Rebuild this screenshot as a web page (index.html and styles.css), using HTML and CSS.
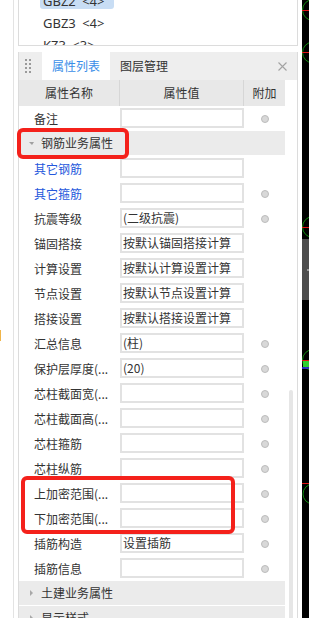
FILE: index.html
```html
<!DOCTYPE html>
<html lang="zh-CN">
<head>
    <meta charset="UTF-8">
    <meta name="viewport" content="width=device-width, initial-scale=1.0">
    <title>属性列表</title>
    <link rel="stylesheet" href="styles.css">
</head>
<body>
    <div class="app">
        <div class="dock-left"><span class="dock-mark"></span></div>

        <div class="workspace">
            <div class="comp-list">
                <ul>
                    <li class="selected">GBZ2 &lt;4&gt;</li>
                    <li>GBZ3 &lt;4&gt;</li>
                    <li>KZ3 &lt;3&gt;</li>
                </ul>
            </div>

            <div class="prop-panel">
                <div class="tab-bar">
                    <span class="grip"></span>
                    <span class="tab active">属性列表</span>
                    <span class="tab">图层管理</span>
                    <svg class="close" width="9" height="9" viewBox="0 0 9 9">
                        <path d="M0.5 0.5 L8.5 8.5 M8.5 0.5 L0.5 8.5" stroke="#a3a3a3" stroke-width="1.1" fill="none"/>
                    </svg>
                </div>

                <div class="prop-body">
                    <div class="prop-table">
                        <div class="prop-head">
                            <span>属性名称</span>
                            <span>属性值</span>
                            <span>附加</span>
                        </div>

                        <div class="prop-row">
                            <span class="label">备注</span>
                            <span class="value"></span>
                            <span class="extra"><i class="radio"></i></span>
                        </div>

                        <div class="prop-group open"><i class="arrow"></i>钢筋业务属性</div>

                        <div class="prop-row">
                            <span class="label link">其它钢筋</span>
                            <span class="value"></span>
                            <span class="extra"></span>
                        </div>
                        <div class="prop-row">
                            <span class="label link">其它箍筋</span>
                            <span class="value"></span>
                            <span class="extra"><i class="radio"></i></span>
                        </div>
                        <div class="prop-row">
                            <span class="label">抗震等级</span>
                            <span class="value">(二级抗震)</span>
                            <span class="extra"><i class="radio"></i></span>
                        </div>
                        <div class="prop-row">
                            <span class="label">锚固搭接</span>
                            <span class="value">按默认锚固搭接计算</span>
                            <span class="extra"></span>
                        </div>
                        <div class="prop-row">
                            <span class="label">计算设置</span>
                            <span class="value">按默认计算设置计算</span>
                            <span class="extra"></span>
                        </div>
                        <div class="prop-row">
                            <span class="label">节点设置</span>
                            <span class="value">按默认节点设置计算</span>
                            <span class="extra"></span>
                        </div>
                        <div class="prop-row">
                            <span class="label">搭接设置</span>
                            <span class="value">按默认搭接设置计算</span>
                            <span class="extra"></span>
                        </div>
                        <div class="prop-row">
                            <span class="label">汇总信息</span>
                            <span class="value">(柱)</span>
                            <span class="extra"><i class="radio"></i></span>
                        </div>
                        <div class="prop-row">
                            <span class="label">保护层厚度(...</span>
                            <span class="value">(20)</span>
                            <span class="extra"><i class="radio"></i></span>
                        </div>
                        <div class="prop-row">
                            <span class="label">芯柱截面宽(...</span>
                            <span class="value"></span>
                            <span class="extra"><i class="radio"></i></span>
                        </div>
                        <div class="prop-row">
                            <span class="label">芯柱截面高(...</span>
                            <span class="value"></span>
                            <span class="extra"><i class="radio"></i></span>
                        </div>
                        <div class="prop-row">
                            <span class="label">芯柱箍筋</span>
                            <span class="value"></span>
                            <span class="extra"><i class="radio"></i></span>
                        </div>
                        <div class="prop-row">
                            <span class="label">芯柱纵筋</span>
                            <span class="value"></span>
                            <span class="extra"><i class="radio"></i></span>
                        </div>
                        <div class="prop-row">
                            <span class="label">上加密范围(...</span>
                            <span class="value"></span>
                            <span class="extra"><i class="radio"></i></span>
                        </div>
                        <div class="prop-row">
                            <span class="label">下加密范围(...</span>
                            <span class="value"></span>
                            <span class="extra"><i class="radio"></i></span>
                        </div>
                        <div class="prop-row">
                            <span class="label">插筋构造</span>
                            <span class="value">设置插筋</span>
                            <span class="extra"><i class="radio"></i></span>
                        </div>
                        <div class="prop-row">
                            <span class="label">插筋信息</span>
                            <span class="value"></span>
                            <span class="extra"><i class="radio"></i></span>
                        </div>

                        <div class="prop-group"><i class="arrow"></i>土建业务属性</div>
                        <div class="prop-group"><i class="arrow"></i>显示样式</div>
                    </div>
                    <div class="scroll-track"><span class="scroll-thumb"></span></div>
                </div>
            </div>
        </div>

        <!-- drawing area peeking in on the right -->
        <svg class="cad" width="7" height="618" viewBox="302 0 7 618">
            <rect x="302" y="0" width="7" height="618" fill="#000"/>
            <circle cx="313" cy="10" r="10.5" stroke="#0e8c0e" fill="none"/>
            <line x1="302" y1="10.5" x2="309" y2="10.5" stroke="#e01414"/>
            <circle cx="313" cy="52.5" r="10.5" stroke="#0e8c0e" fill="none"/>
            <line x1="302" y1="52.5" x2="309" y2="52.5" stroke="#e01414"/>
            <circle cx="313" cy="227" r="10.5" stroke="#0e8c0e" fill="none"/>
            <line x1="302" y1="227.5" x2="309" y2="227.5" stroke="#e01414"/>
            <rect x="302" y="239" width="7" height="61" fill="#4d4d4d"/>
            <rect x="307" y="269" width="2" height="2" fill="#9a9a9a"/>
            <circle cx="313" cy="360" r="10.5" stroke="#0e8c0e" fill="none"/>
            <rect x="303" y="361" width="6" height="6" fill="#2fd12f"/>
            <line x1="302" y1="360.5" x2="309" y2="360.5" stroke="#e01414"/>
            <line x1="302" y1="368" x2="309" y2="368" stroke="#3a3aff" stroke-width="1.5"/>
            <line x1="302" y1="483.5" x2="309" y2="483.5" stroke="#e01414"/>
            <circle cx="313" cy="494" r="10" stroke="#0e8c0e" fill="none"/>
        </svg>
    </div>

    <!-- red annotation frames -->
    <div class="mark mark-group"></div>
    <div class="mark mark-range"></div>
</body>
</html>
```

FILE: styles.css
```css
body {
    margin: 0;
    font-family: "Noto Sans CJK SC", "Noto Sans", sans-serif;
    font-size: 12px;
    color: #333;
    background: #fff;
}

.app {
    display: flex;
    width: 309px;
    height: 618px;
    overflow: hidden;
}

.dock-left {
    width: 13px;
    border-right: 1px solid #e3e3e3;
    display: flex;
    flex-direction: column;
    padding-top: 330px;
    box-sizing: content-box;
}

.dock-mark {
    width: 1px;
    height: 11px;
    background: #f0b54a;
}

.workspace {
    width: 280px;
    margin-left: 4px;
    display: flex;
    flex-direction: column;
}

/* component list above the panel */
.comp-list {
    display: flow-root;
    height: 46px;
    flex-shrink: 0;
    box-sizing: border-box;
    border: 1px solid #dcdcdc;
    border-top: none;
    overflow: hidden;
}

.comp-list ul {
    list-style: none;
    margin: -12px 0 0 0;
    padding: 0 0 0 21px;
}

.comp-list li {
    width: 74px;
    height: 21px;
    box-sizing: border-box;
    padding: 5px 0 0 3px;
    margin-bottom: 1px;
    line-height: 16px;
    font-family: "Noto Sans", "Noto Sans CJK SC", sans-serif;
    font-size: 13px;
    word-spacing: 3px;
    color: #333;
    border-radius: 3px;
}

.comp-list li.selected {
    background: #c8ddf4;
}

/* property panel */
.prop-panel {
    flex: 1;
    margin-top: 6px;
    border-left: 1px solid #dcdcdc;
    border-right: 1px solid #dcdcdc;
    display: flex;
    flex-direction: column;
}

.tab-bar {
    height: 28px;
    flex-shrink: 0;
    background: #eeeeee;
    display: flex;
    align-items: stretch;
}

.grip {
    width: 8px;
    height: 16px;
    margin: 6px 10px 0 5px;
    background-image: radial-gradient(circle, #9a9a9a 0.9px, transparent 1.3px);
    background-size: 4px 4px;
}

.tab {
    padding: 0 10px;
    line-height: 28px;
    color: #333;
}

.tab.active {
    background: #fff;
    color: #3a8ee8;
}

.close {
    margin: 10px 10px 0 auto;
}

.prop-body {
    flex: 1;
    display: flex;
}

.prop-table {
    width: 266px;
}

.prop-head {
    display: grid;
    grid-template-columns: 101px 124px 41px;
    height: 26px;
    line-height: 26px;
    background: #e8e8e8;
    text-align: center;
}

.prop-head span {
    border-right: 1px solid #d6d6d6;
}

.prop-head span:last-child {
    border-right: none;
}

.prop-row {
    display: grid;
    grid-template-columns: 101px 124px 41px;
    height: 25px;
}

.label {
    padding-left: 15px;
    line-height: 25px;
    white-space: nowrap;
    overflow: hidden;
}

.label.link {
    color: #2457dc;
}

.value {
    margin-top: 2px;
    height: 20px;
    box-sizing: border-box;
    border: 2px solid #e2e2e2;
    padding-left: 1px;
    line-height: 16px;
    white-space: nowrap;
    overflow: hidden;
}

.extra {
    display: flex;
    justify-content: center;
    align-items: center;
}

.radio {
    width: 8px;
    height: 8px;
    box-sizing: border-box;
    border-radius: 50%;
    background: #d8d8d8;
    border: 1px solid #bcbcbc;
}

.prop-group {
    height: 24px;
    line-height: 24px;
    border-bottom: 1px solid #fff;
    background: #ebebeb;
    display: flex;
    align-items: center;
    padding-left: 10px;
}

.arrow {
    width: 0;
    height: 0;
    margin-right: 8px;
    border-top: 3px solid transparent;
    border-bottom: 3px solid transparent;
    border-left: 3px solid #a8a8a8;
    margin-left: 1px;
}

.prop-group.open .arrow {
    border-left: 3px solid transparent;
    border-right: 2px solid transparent;
    border-top: 3px solid #a0a0a0;
    border-bottom: none;
    margin-left: 0;
    margin-right: 7px;
}

.scroll-track {
    flex: 1;
    padding: 310px 0 0 4px;
}

.scroll-thumb {
    display: block;
    width: 4px;
    height: 240px;
    border-radius: 2px;
    background: #e6e6e6;
}

.cad {
    display: block;
    margin-left: 4px;
    flex-shrink: 0;
}

/* annotation frames */
.mark {
    position: absolute;
    box-sizing: border-box;
    border: 4px solid #f4211b;
    border-radius: 6px;
}

.mark-group {
    left: 17px;
    top: 128px;
    width: 112px;
    height: 31px;
}

.mark-range {
    left: 21px;
    top: 476px;
    width: 214px;
    height: 58px;
}
```
